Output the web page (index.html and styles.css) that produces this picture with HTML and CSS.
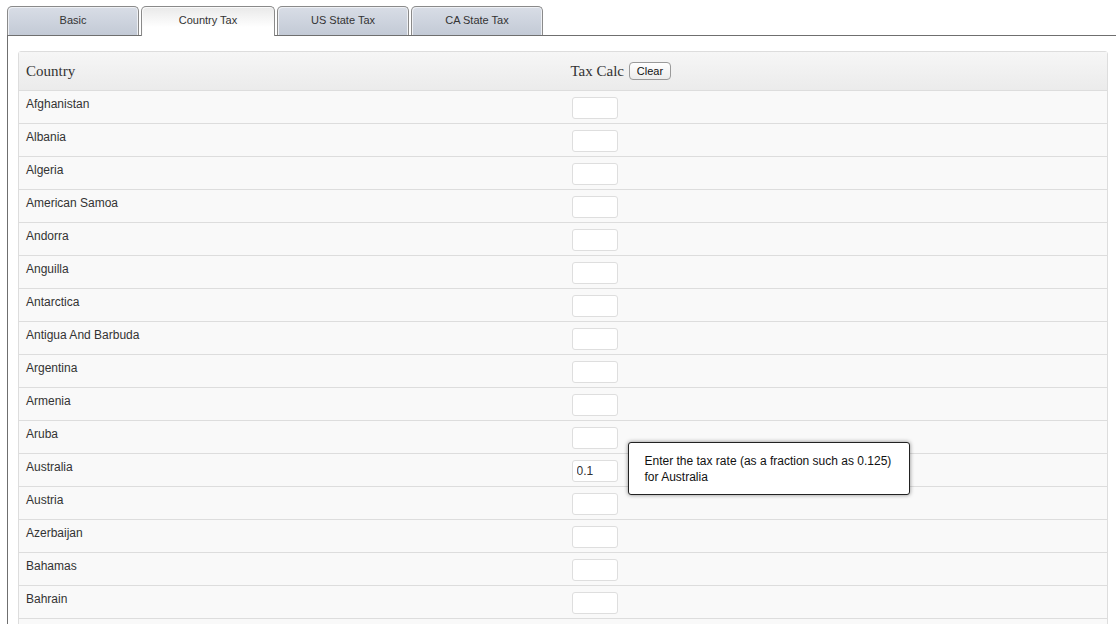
FILE: index.html
```html
<!DOCTYPE html>
<html>
<head>
<meta charset="utf-8">
<link rel="stylesheet" href="styles.css">
</head>
<body>
<div class="page">
  <div class="tabs">
    <div class="tab">Basic</div>
    <div class="tab active">Country Tax</div>
    <div class="tab">US State Tax</div>
    <div class="tab">CA State Tax</div>
  </div>
  <div class="content">
    <table class="grid">
      <thead>
        <tr>
          <th class="col">Country</th>
          <th class="col">Tax Calc <button class="clear">Clear</button></th>
        </tr>
      </thead>
      <tbody>
        <tr><td>Afghanistan</td><td><input class="rate" type="text"></td></tr>
        <tr><td>Albania</td><td><input class="rate" type="text"></td></tr>
        <tr><td>Algeria</td><td><input class="rate" type="text"></td></tr>
        <tr><td>American Samoa</td><td><input class="rate" type="text"></td></tr>
        <tr><td>Andorra</td><td><input class="rate" type="text"></td></tr>
        <tr><td>Anguilla</td><td><input class="rate" type="text"></td></tr>
        <tr><td>Antarctica</td><td><input class="rate" type="text"></td></tr>
        <tr><td>Antigua And Barbuda</td><td><input class="rate" type="text"></td></tr>
        <tr><td>Argentina</td><td><input class="rate" type="text"></td></tr>
        <tr><td>Armenia</td><td><input class="rate" type="text"></td></tr>
        <tr><td>Aruba</td><td><input class="rate" type="text"></td></tr>
        <tr><td>Australia</td><td class="has-tip"><input class="rate" type="text" value="0.1"><div class="tooltip">Enter the tax rate (as a fraction such as 0.125)<br>for Australia</div></td></tr>
        <tr><td>Austria</td><td><input class="rate" type="text"></td></tr>
        <tr><td>Azerbaijan</td><td><input class="rate" type="text"></td></tr>
        <tr><td>Bahamas</td><td><input class="rate" type="text"></td></tr>
        <tr><td>Bahrain</td><td><input class="rate" type="text"></td></tr>
        <tr><td></td><td><input class="rate" type="text"></td></tr>
      </tbody>
    </table>
  </div>
</div>
</body>
</html>
```
FILE: styles.css
```css
html, body {
  margin: 0;
  padding: 0;
  background: #fff;
  font-family: "Liberation Sans", Arial, sans-serif;
  color: #333;
}
.page {
  padding: 6px 0 0 7px;
}
.tabs {
  display: flex;
  gap: 2px;
  height: 29px;
  border-bottom: 1px solid #6f6f6f;
}
.tab {
  box-sizing: border-box;
  width: 132px;
  height: 29px;
  border: 1px solid #8a8a8a;
  border-bottom: none;
  border-radius: 5px 5px 0 0;
  box-shadow: inset 1px 1px 0 #eef0f4, inset -1px 0 0 #eef0f4;
  background: linear-gradient(#d8dde6, #c3cad6);
  font-size: 11px;
  line-height: 27px;
  text-align: center;
  color: #333;
}
.tab.active {
  width: 134px;
  height: 30px;
  background: linear-gradient(#e9e9e9, #ffffff 70%);
  box-shadow: inset 1px 1px 0 #fafafa;
  position: relative;
  z-index: 1;
}
.content {
  border-left: 1px solid #6f6f6f;
  padding: 15px 8px 0 10px;
}
.grid {
  width: 100%;
  border: 1px solid #dddddd;
  border-radius: 3px;
  border-spacing: 0;
  background: #f9f9f9;
  table-layout: fixed;
}
.grid th {
  height: 38px;
  padding: 0 8px;
  text-align: left;
  font-family: "Liberation Serif", Georgia, serif;
  font-weight: normal;
  font-size: 15px;
  color: #333;
  background: linear-gradient(#f6f6f6, #ebebeb);
  vertical-align: middle;
}
.grid th:first-child,
.grid td:first-child {
  padding-left: 7px;
}
.col {
  width: 50%;
}
.clear {
  font-family: "Liberation Sans", Arial, sans-serif;
  font-size: 11px;
  color: #111;
  height: 18px;
  padding: 0 7px;
  margin-left: 1px;
  border: 1px solid #9a9a9a;
  border-radius: 4px;
  background: linear-gradient(#ffffff, #ececec);
  vertical-align: 1px;
}
.grid td {
  box-sizing: border-box;
  height: 33px;
  padding: 6px 8px 4px;
  border-top: 1px solid #dddddd;
  font-size: 12px;
  line-height: 14px;
  vertical-align: top;
  color: #333;
}
.rate {
  box-sizing: border-box;
  display: block;
  width: 46px;
  height: 22px;
  margin: 0 0 0 1px;
  padding: 0 4px;
  border: 1px solid #dedede;
  border-radius: 3px;
  background: #fff;
  font-family: "Liberation Sans", Arial, sans-serif;
  font-size: 12px;
  color: #333;
  outline: none;
}
.has-tip {
  position: relative;
}
.tooltip {
  position: absolute;
  left: 65px;
  top: -12px;
  box-sizing: border-box;
  width: 282px;
  height: 53px;
  padding: 10px 16px;
  background: #fff;
  border: 1px solid #222;
  border-radius: 3px;
  box-shadow: 0 0 4px rgba(0,0,0,0.45);
  font-size: 12px;
  line-height: 16px;
  color: #111;
  z-index: 5;
}
```
